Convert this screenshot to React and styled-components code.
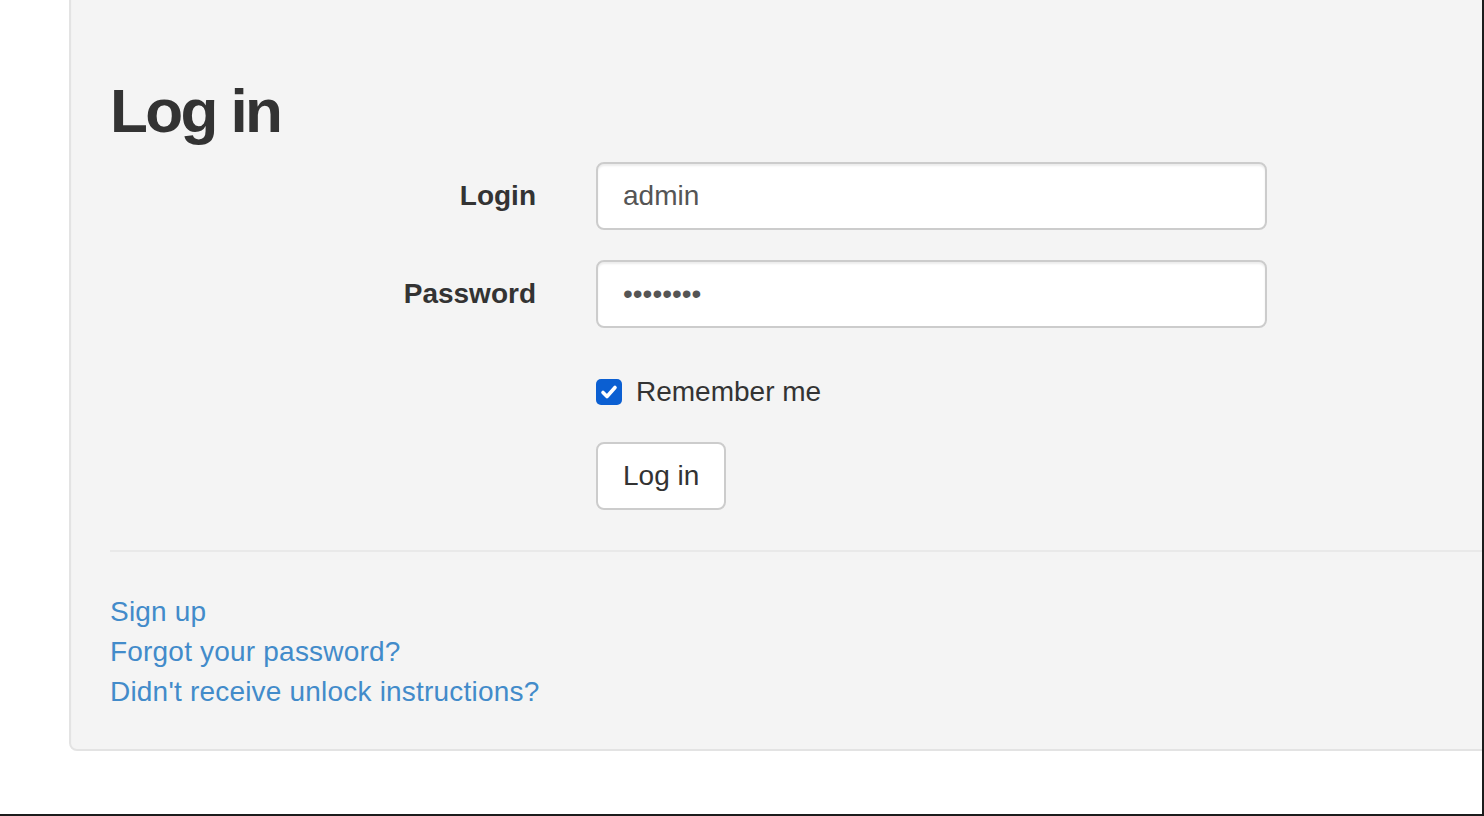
import styled, { createGlobalStyle } from "styled-components";

const GlobalStyle = createGlobalStyle`
    html, body {
        margin: 0;
        padding: 0;
        background: #ffffff;
    }

    body {
        font-family: "Liberation Sans", Arial, Helvetica, sans-serif;
        color: #333333;
    }

    * {
        box-sizing: border-box;
    }
`

const Frame = styled.div`
    width: 1484px;
    height: 816px;
    overflow: hidden;
    border-right: 2px solid #1c1c1c;
    border-bottom: 2px solid #1c1c1c;
`

const Well = styled.div`
    margin: -40px -80px 0 69px;
    padding: 39px;
    padding-bottom: 37px;
    background: #f4f4f4;
    border: 2px solid #e3e3e3;
    border-radius: 8px;
    box-shadow: inset 0 2px 2px rgba(0, 0, 0, 0.03);
`

const Heading = styled.h1`
    margin: 76px 0 17px;
    font-size: 62px;
    line-height: 68px;
    font-weight: 700;
    letter-spacing: -2.6px;
    color: #333333;
`

const Form = styled.form`
    display: flex;
    flex-direction: column;
`

const Row = styled.div`
    display: grid;
    grid-template-columns: 426px 670px;
    column-gap: 60px;
    align-items: center;
    min-height: 68px;
    margin-bottom: ${(p) => p.$gap ?? 30}px;
`

const Label = styled.label`
    text-align: right;
    font-size: 28px;
    font-weight: 700;
    line-height: 40px;
    color: #333333;
`

const Input = styled.input`
    display: block;
    width: 671px;
    height: 68px;
    padding: 0 25px;
    font-family: inherit;
    font-size: 28px;
    color: #555555;
    background: #ffffff;
    border: 2px solid #cccccc;
    border-radius: 8px;
    box-shadow: inset 0 2px 2px rgba(0, 0, 0, 0.075);
    outline: none;
`

const CheckLabel = styled.label`
    grid-column: 2;
    display: flex;
    align-items: center;
    gap: 14px;
    font-size: 28px;
    line-height: 40px;
    color: #333333;
`

const CheckBox = styled.span`
    display: flex;
    align-items: center;
    justify-content: center;
    width: 26px;
    height: 26px;
    border-radius: 5px;
    background: #0b5fd2;
`

const Button = styled.button`
    grid-column: 2;
    justify-self: start;
    height: 68px;
    padding: 0 25px;
    font-family: inherit;
    font-size: 28px;
    color: #333333;
    background: #ffffff;
    border: 2px solid #cccccc;
    border-radius: 8px;
    cursor: pointer;
`

const Rule = styled.hr`
    margin: 40px 0;
    height: 2px;
    border: 0;
    background: #e9e9e9;
`

const Links = styled.div`
    display: flex;
    flex-direction: column;
    align-items: flex-start;
`

const Link = styled.a`
    font-size: 28px;
    line-height: 40px;
    letter-spacing: 0.2px;
    color: #428bca;
    text-decoration: none;
`

const App = () => {
    return (
        <Frame>
            <GlobalStyle />
            <Well>
                <Heading>Log in</Heading>

                <Form onSubmit={(e) => e.preventDefault()}>
                    <Row>
                        <Label htmlFor="login">Login</Label>
                        <Input id="login" type="text" value="admin" readOnly />
                    </Row>

                    <Row>
                        <Label htmlFor="password">Password</Label>
                        <Input id="password" type="password" value="password" readOnly />
                    </Row>

                    <Row $gap={16}>
                        <CheckLabel>
                            <CheckBox>
                                <svg width="18" height="18" viewBox="0 0 18 18">
                                    <path d="M3 9.5 L7 13.5 L15 4.5" fill="none" stroke="#fff" strokeWidth="3.6" strokeLinecap="round" strokeLinejoin="round" />
                                </svg>
                            </CheckBox>
                            Remember me
                        </CheckLabel>
                    </Row>

                    <Row $gap={0}>
                        <Button type="submit">Log in</Button>
                    </Row>
                </Form>

                <Rule />

                <Links>
                    <Link href="#">Sign up</Link>
                    <Link href="#">Forgot your password?</Link>
                    <Link href="#">Didn't receive unlock instructions?</Link>
                </Links>
            </Well>
        </Frame>
    )
}

export default App
